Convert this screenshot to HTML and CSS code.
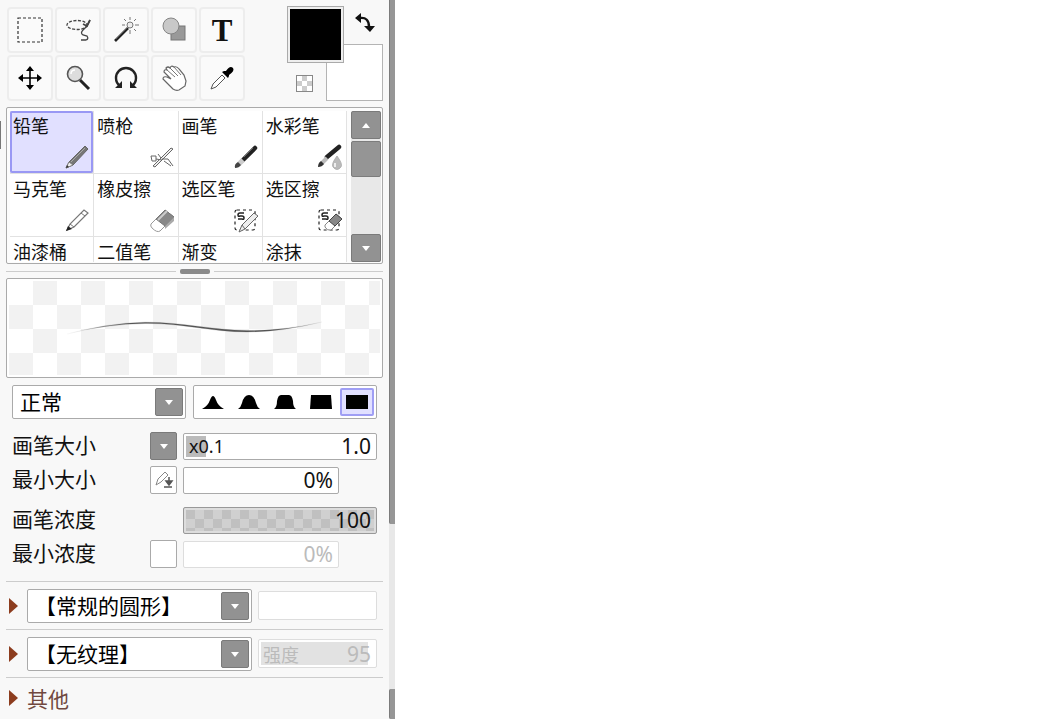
FILE: index.html
```html
<!DOCTYPE html>
<html lang="zh-CN">
<head>
<meta charset="utf-8">
<meta name="viewport" content="width=device-width, initial-scale=1">
<title>画笔</title>
<link rel="stylesheet" href="styles.css">
</head>
<body>
<aside class="panel">
  <div class="content">
    <header class="top">
      <div class="tools">
        <button class="tool" aria-label="选框"><svg width="30" height="30" viewBox="0 0 30 30"><rect x="3" y="3" width="24" height="24" fill="none" stroke="#333" stroke-width="1.2" stroke-dasharray="3 2"/></svg></button>
        <button class="tool" aria-label="套索"><svg width="30" height="30" viewBox="0 0 30 30" fill="none" stroke="#444" stroke-width="1.3"><ellipse cx="14" cy="10" rx="10" ry="4.500" stroke-dasharray="3 1.500"/><path d="M27 5 24 11 20 15Q17 18 20 20L24 21Q26 24 23 25L18 25"/><path d="M20 9 24 11 27 5" stroke-width="1.800"/></svg></button>
        <button class="tool" aria-label="魔棒"><svg width="30" height="30" viewBox="0 0 30 30" fill="none"><path d="M4 26 17 13" stroke="#222" stroke-width="2.600"/><path d="M5 24 16 13" stroke="#777" stroke-width=".7"/><circle cx="19" cy="10" r="3" fill="#eee" stroke="#777"/><path d="M19 2v3M19 15v4M11 10h3M24 10h4M13 4l2 2M25 4l-2 2M25 16l-2-2" stroke="#777"/></svg></button>
        <button class="tool" aria-label="形状"><svg width="30" height="30" viewBox="0 0 30 30"><rect x="12" y="11" width="14" height="14" fill="#999" stroke="#777"/><circle cx="12" cy="11" r="8" fill="#c8c8c8" stroke="#858585"/></svg></button>
        <button class="tool tool-text" aria-label="文字">T</button>
        <button class="tool" aria-label="移动"><svg width="30" height="30" viewBox="0 0 30 30"><path d="M15 6v18M6 15h18" stroke="#000" stroke-width="1.600"/><path d="M15 3l4 5h-8zM15 27l4-5h-8zM3 15l5-4v8zM27 15l-5-4v8z"/></svg></button>
        <button class="tool" aria-label="缩放"><svg width="30" height="30" viewBox="0 0 30 30"><path d="M17 17l9 9" stroke="#222" stroke-width="3"/><circle cx="12" cy="11" r="7.500" fill="#ddd" stroke="#555" stroke-width="1.600"/><path d="M8 11q0-4 4-4" fill="none" stroke="#fff" stroke-width="1.500"/></svg></button>
        <button class="tool" aria-label="旋转"><svg width="30" height="30" viewBox="0 0 30 30"><path d="M9 23Q5 20 5 15A10 10 0 0 1 25 15Q25 20 21 23" fill="none" stroke="#222" stroke-width="2.400"/><path d="M11 18v7H4zM19 18v7h7z" fill="#222"/></svg></button>
        <button class="tool" aria-label="抓手"><svg width="30" height="30" viewBox="0 0 30 30"><path d="M14 26 8 20 4 16Q4 13 8 14L12 16 5 9Q5 6 8 7L7 5Q9 3 11 5Q12 2 15 4Q18 3 20 6L25 12 27 18 26 23 20 27Q17 28 14 26Z" fill="#fff" stroke="#666" stroke-width="1.200"/><path d="M8 7l8 7M11 5l8 8M15 4l7 8" stroke="#777" fill="none"/></svg></button>
        <button class="tool" aria-label="吸管"><svg width="30" height="30" viewBox="0 0 30 30"><path d="M4 26 6 21 15 12 18 15 9 24Z" fill="#fff" stroke="#555"/><path d="M15 9 21 15 22 13 22 12Q28 8 26 5Q23 2 19 8L17 8Z" fill="#000"/></svg></button>
      </div>
      <div class="colors">
        <button class="swatch swatch-back" aria-label="背景色"></button>
        <button class="swatch swatch-front" aria-label="前景色"></button>
        <button class="swap" aria-label="交换颜色"><svg width="22" height="22" viewBox="0 0 22 22"><path d="M6 6Q15 5 15 15" fill="none" stroke="#111" stroke-width="2.400"/><path d="M1 6 7 1v10zM10 14h11l-5 6z" fill="#111"/></svg></button>
        <button class="clear" aria-label="透明色"></button>
      </div>
    </header>

    <section class="brushes">
      <div class="brush-grid">
        <button class="brush selected"><span>铅笔</span><svg width="26" height="26" viewBox="0 0 26 26"><path d="M2 24 5 18 21 2 24 5 9 21Z" fill="#777" stroke="#666"/><path d="M2 24 5 18 9 21Z" fill="#eee" stroke="#777" stroke-width=".8"/><path d="M7 18 21 4" stroke="#aaa"/><path d="M2 24l1-3 2 2z" fill="#333"/></svg></button>
        <button class="brush"><span>喷枪</span><svg width="26" height="26" viewBox="0 0 26 26" fill="none" stroke="#666"><path d="M4 22 22 4 24 5 6 23Z" fill="#eee"/><path d="M2 12h5v5H3zM7 15l6 1M9 10l3 4M13 15h6l5 7M15 17l7 5"/></svg></button>
        <button class="brush"><span>画笔</span><svg width="26" height="26" viewBox="0 0 26 26"><path d="M10 16 22 4" stroke="#222" stroke-width="4.500" stroke-linecap="round"/><path d="M6 20l4-4" stroke="#ccc" stroke-width="5"/><path d="M2 24Q1 20 5 18L8 21Q6 24 2 24Z" fill="#444"/><path d="M11 13l9-9" stroke="#777" stroke-width=".8"/></svg></button>
        <button class="brush"><span>水彩笔</span><svg width="26" height="26" viewBox="0 0 26 26"><path d="M10 13 22 3" stroke="#222" stroke-width="4.500" stroke-linecap="round"/><path d="M5 19l5-5" stroke="#bbb" stroke-width="4"/><path d="M1 23Q1 19 4 17L7 20Q5 23 1 23Z" fill="#333"/><path d="M20 12Q26 20 24 23Q20 28 16 23Q14 20 20 12Z" fill="#bbb" stroke="#aaa" stroke-width=".8"/><path d="M18 19v4" stroke="#eee" stroke-width="2"/></svg></button>
        <button class="brush"><span>马克笔</span><svg width="26" height="26" viewBox="0 0 26 26"><path d="M3 23 6 17 20 3 24 6 10 20Z" fill="#fff" stroke="#777" stroke-width="1.200"/><path d="M6 17l4 3M17 6l4 3" stroke="#777"/><path d="M2 24l2-5 4 3z" fill="#222"/></svg></button>
        <button class="brush"><span>橡皮擦</span><svg width="26" height="26" viewBox="0 0 26 26"><path d="M2 17 16 3 25 10 11 24Q8 26 3 21Q1 19 2 17Z" fill="#fff" stroke="#999"/><path d="M7 12 16 3 25 10 16 19Z" fill="#888" stroke="#777"/><path d="M16 19l9-9v4l-9 8z" fill="#aaa"/><path d="M9 13l9-9" stroke="#ccc" stroke-width="2"/></svg></button>
        <button class="brush"><span>选区笔</span><svg width="26" height="26" viewBox="0 0 26 26"><rect x="2" y="3" width="20" height="20" rx="2" fill="none" stroke="#222" stroke-width="1.200" stroke-dasharray="3 3"/><path d="M11 6H7Q5 6 5 8T7 9H9Q11 9 11 11T9 12H5" fill="none" stroke="#222" stroke-width="1.500"/><path d="M6 25 9 18 21 6 25 9 12 22Z" fill="#eee" stroke="#666"/><path d="M9 18l3 4" stroke="#666"/></svg></button>
        <button class="brush"><span>选区擦</span><svg width="26" height="26" viewBox="0 0 26 26"><rect x="2" y="3" width="20" height="20" rx="2" fill="none" stroke="#222" stroke-width="1.200" stroke-dasharray="3 3"/><path d="M11 6H7Q5 6 5 8T7 9H9Q11 9 11 11T9 12H5" fill="none" stroke="#222" stroke-width="1.500"/><path d="M8 18 19 7 25 12 14 23Q10 24 8 20Z" fill="#fff" stroke="#888"/><path d="M12 14 19 7 25 12 18 19Z" fill="#888" stroke="#444"/></svg></button>
        <button class="brush"><span>油漆桶</span></button>
        <button class="brush"><span>二值笔</span></button>
        <button class="brush"><span>渐变</span></button>
        <button class="brush"><span>涂抹</span></button>
      </div>
      <div class="list-scroll">
        <button class="gray-button up" aria-label="向上"></button>
        <div class="list-thumb"></div>
        <button class="gray-button down" aria-label="向下"></button>
      </div>
    </section>

    <div class="splitter"><i></i></div>

    <div class="preview">
      <svg viewBox="0 0 375 98" width="100%" height="98">
        <defs>
          <linearGradient id="fade"><stop offset="0" stop-color="#555" stop-opacity=".1"/><stop offset=".25" stop-color="#555"/><stop offset=".8" stop-color="#555"/><stop offset="1" stop-color="#555" stop-opacity=".2"/></linearGradient>
        </defs>
        <path d="M60 55Q100 45 138 44.500C175 44 205 53 240 53Q275 53 315 43Q275 52 240 51.600C205 51 175 43 138 43.200Q100 44 60 55Z" fill="url(#fade)" stroke="url(#fade)" stroke-width=".2"/>
      </svg>
    </div>

    <div class="mode-row">
      <div class="drop"><select aria-label="混合模式"><option>正常</option></select></div>
      <div class="tips">
        <button class="tip" aria-label="尖"><svg width="24" height="16" viewBox="0 0 24 16"><path d="M1 15Q7 12 9 6Q12-2 15 6Q17 12 23 15Z"/></svg></button>
        <button class="tip" aria-label="圆"><svg width="24" height="16" viewBox="0 0 24 16"><path d="M1 15Q4 13 5 9Q7 1 12 1T19 9Q20 13 23 15Z"/></svg></button>
        <button class="tip" aria-label="梯形"><svg width="24" height="16" viewBox="0 0 24 16"><path d="M1 15Q4 13 4 7Q5 1 8 1H16Q19 1 20 7Q20 13 23 15Z"/></svg></button>
        <button class="tip" aria-label="宽"><svg width="24" height="16" viewBox="0 0 24 16"><path d="M1 15 2 1H22L23 15Z"/></svg></button>
        <button class="tip selected" aria-label="矩形"><svg width="24" height="16" viewBox="0 0 24 16"><path d="M1 1H23V15H1Z"/></svg></button>
      </div>
    </div>

    <div class="settings">
      <div class="setting">
        <label for="size">画笔大小</label>
        <button class="gray-button down small" aria-label="倍率"></button>
        <div class="field size"><span class="unit">x0.1</span><input id="size" type="text" value="1.0"></div>
      </div>
      <div class="setting">
        <label for="min-size">最小大小</label>
        <button class="small pressure" aria-label="笔压"><svg width="20" height="20" viewBox="0 0 20 20"><path d="M2 15 4 9 11 2 14 5 7 12Z" fill="#fff" stroke="#888"/><path d="M15 7v6M12 11h6l-3 4zM10 17h8" stroke="#555" stroke-width="1.500" fill="#555"/></svg></button>
        <div class="field short"><input id="min-size" type="text" value="0%"></div>
      </div>
      <div class="setting spaced">
        <label for="density">画笔浓度</label>
        <div class="field density"><input id="density" type="text" value="100"></div>
      </div>
      <div class="setting">
        <label for="min-density">最小浓度</label>
        <input class="small check" type="checkbox" aria-label="笔压浓度">
        <div class="field short off"><input id="min-density" type="text" value="0%" disabled></div>
      </div>
    </div>

    <div class="extra">
      <button class="fold" aria-label="展开"></button>
      <div class="drop"><select aria-label="形状"><option>【常规的圆形】</option></select></div>
      <div class="field side off"><input type="text" aria-label="形状强度" disabled></div>
    </div>
    <div class="extra">
      <button class="fold" aria-label="展开"></button>
      <div class="drop"><select aria-label="纹理"><option>【无纹理】</option></select></div>
      <div class="field side off strength"><label class="unit" for="strength">强度</label><input id="strength" type="text" value="95" disabled></div>
    </div>
    <div class="extra other"><button class="fold fold-text">其他</button></div>
  </div>
  <div class="rail"><i class="rail-main"></i><i class="rail-gap"></i><i class="rail-end"></i></div>
  <i class="edge-mark"></i>
</aside>
</body>
</html>
```
FILE: styles.css
```css
*, *::before, *::after { box-sizing: border-box; }

body {
  margin: 0;
  background: #fff;
  color: #111;
  font-family: "Noto Sans CJK SC", "Noto Sans", sans-serif;
}

button, input, select { margin: 0; padding: 0; font: inherit; color: inherit; }
button { border: 0; background: none; }
svg { display: block; }

.panel {
  position: relative;
  display: flex;
  width: 395px;
  max-width: 100%;
  min-height: 100vh;
  background: #f8f8f8;
}
.content { flex: 1; min-width: 0; padding: 6px 6px 0; }

/* Tools and colours */
.top { display: flex; justify-content: space-between; height: 101px; }
.tools {
  display: grid;
  grid-template-columns: repeat(5, 46px);
  grid-auto-rows: 46px;
  align-content: start;
  gap: 2px;
  padding: 1px 0 0 1px;
}
.tool {
  display: grid;
  place-items: center;
  border: 2px solid #ededed;
  border-radius: 4px;
  background: #fafafa;
}
.tool-text { font: bold 31px/1 "Liberation Serif", serif; }
.colors { position: relative; width: 96px; height: 95px; }
.swatch { position: absolute; width: 57px; height: 57px; border: 1px solid #b4b4b4; }
.swatch-back { right: 0; bottom: 0; background: #fff; }
.swatch-front { left: 0; top: 0; border-color: #aaa; background: #000; box-shadow: inset 0 0 0 2px #eee; }
.swap { position: absolute; right: 7px; top: 6px; }
.clear {
  position: absolute;
  left: 9px;
  bottom: 9px;
  width: 17px;
  height: 17px;
  border: 1px solid #888;
  background: repeating-conic-gradient(#ccc 0 25%, #fff 0 50%) 0 0 / 10px 10px;
}

/* Brush list */
.brushes {
  display: flex;
  height: 157px;
  padding: 3px 1px 1px 3px;
  border: 1px solid #aaa;
  border-radius: 2px;
  background: #fcfcfc;
}
.brush-grid {
  flex: 1;
  display: grid;
  grid-template-columns: repeat(4, 1fr);
  grid-template-rows: 62px 62px 1fr;
  gap: 1px;
  border-right: 1px solid #e2e2e2;
  background: #e2e2e2;
}
.brush {
  display: flex;
  flex-direction: column;
  justify-content: space-between;
  padding: 4px 3px 0;
  background: #fff;
  font-size: 18px;
  line-height: 20px;
  text-align: left;
}
.brush svg { align-self: flex-end; margin-bottom: 3px; }
.brush.selected { background: #e1e0ff; box-shadow: inset 0 0 0 2px #9998f4; border-radius: 2px; }
.list-scroll {
  display: flex;
  flex-direction: column;
  width: 30px;
  margin-left: 4px;
  background: #e8e8e8;
}
.list-thumb { height: 36px; margin: 2px 0 auto; border: 1px solid #7c7c7c; border-radius: 2px; background: #959595; }

.gray-button {
  display: grid;
  place-items: center;
  width: 100%;
  height: 28px;
  border: 1px solid #7a7a7a;
  border-radius: 2px;
  background: #929292;
}
.gray-button::after, .drop::after {
  content: "";
  border: 4px solid transparent;
  border-top: 5px solid #fff;
  border-bottom: 0;
}
.gray-button.up::after { border: 4px solid transparent; border-top: 0; border-bottom: 5px solid #fff; }

.splitter { display: flex; align-items: center; gap: 4px; height: 14px; }
.splitter::before, .splitter::after { content: ""; flex: 1; height: 1px; background: #ccc; }
.splitter i { width: 30px; height: 5px; border-radius: 2px; background: #8a8a8a; }

.preview {
  border: 1px solid #aaa;
  border-radius: 2px;
  background: repeating-conic-gradient(#f2f2f2 0 25%, #fff 0 50%) 2px 2px / 48px 48px;
  box-shadow: inset 0 0 0 2px #fff;
}

/* Mode and tip shape */
.mode-row { display: flex; gap: 7px; padding: 7px 6px 0; }
.drop {
  position: relative;
  flex: 1;
  height: 34px;
  border: 1px solid #aaa;
  border-radius: 2px;
  background: #fff;
  font-size: 21px;
}
.drop select {
  display: block;
  appearance: none;
  width: 100%;
  height: 30px;
  padding-left: 7px;
  border: 0;
  background: none;
  color: #000;
}
.drop::before {
  content: "";
  position: absolute;
  right: 2px;
  top: 2px;
  width: 28px;
  height: 28px;
  border: 1px solid #7a7a7a;
  border-radius: 2px;
  background: #929292;
  pointer-events: none;
}
.drop::after { position: absolute; right: 12px; top: 14px; pointer-events: none; }
.tips {
  display: flex;
  width: 184px;
  padding: 2px;
  gap: 2px;
  justify-content: flex-end;
  border: 1px solid #aaa;
  border-radius: 2px;
  background: #fff;
}
.tip { display: grid; place-items: center; width: 34px; }
.tip.selected { border: 2px solid #9f9ef4; border-radius: 2px; background: #e1e0ff; }

/* Sliders */
.settings {
  display: flex;
  flex-direction: column;
  gap: 6px;
  padding: 13px 6px 13px;
  border-bottom: 1px solid #ccc;
}
.setting {
  display: grid;
  grid-template-columns: 132px 27px 1fr;
  column-gap: 6px;
  align-items: center;
  height: 28px;
}
.setting > label { grid-column: 1; align-self: start; font-size: 21px; line-height: 25px; }
.small { grid-column: 2; width: 27px; height: 28px; }
.pressure, .check {
  display: grid;
  place-items: center;
  border: 1px solid #aaa;
  border-radius: 2px;
  background: #fff;
}
.check { appearance: none; }
.field {
  display: flex;
  align-items: center;
  grid-column: 3;
  height: 27px;
  padding: 0 5px;
  border: 1px solid #aaa;
  border-radius: 2px;
  background: #fff;
  font: 21px/24px "Noto Sans", sans-serif;
}
.field input { flex: 1; width: 0; min-width: 0; height: 100%; border: 0; background: none; text-align: right; }
.short { margin-right: 38px; }
.unit { font-size: 18px; }
.size { background: linear-gradient(#bbb, #bbb) 2px 2px / 20px 21px no-repeat #fff; }
.density {
  border-color: #999;
  background: repeating-conic-gradient(#d0d0d0 0 25%, #c0c0c0 0 50%) 2px 2px / 18px 18px;
  box-shadow: inset 0 0 0 2px #ddd;
}
.spaced { margin-top: 6px; }
.off { border-color: #ddd; color: #bbb; }

/* Shape and texture */
.extra {
  display: flex;
  align-items: center;
  gap: 6px;
  height: 48px;
  padding: 0 6px 0 3px;
  border-bottom: 1px solid #ccc;
}
.fold { display: flex; align-items: center; gap: 9px; width: 12px; }
.fold::before {
  content: "";
  border: 8px solid transparent;
  border-left: 9px solid #8c3c1e;
  border-right: 0;
}
.side { flex: 0 0 119px; height: 29px; }
.strength { background: linear-gradient(#e2e2e2, #e2e2e2) 2px 2px / 107px 23px no-repeat #fff; padding-left: 4px; }
.strength .unit { font-family: "Noto Sans CJK SC", sans-serif; }
.other { height: 40px; border: 0; }
.fold-text { width: auto; font-size: 21px; line-height: 28px; color: #704840; }

/* Window scroll rail */
.rail { display: flex; flex-direction: column; width: 6px; background: #e8e8e8; }
.rail i { background: #969696; border-left: 1px solid #7c7c7c; }
.rail-main { flex: 524; border-radius: 0 0 0 2px; }
.rail .rail-gap { flex: 165; background: none; border: 0; }
.rail-end { flex: 30; border-radius: 2px 0 0 2px; }
.edge-mark { position: absolute; left: 0; top: 121px; width: 1px; height: 28px; background: #777; }
```
